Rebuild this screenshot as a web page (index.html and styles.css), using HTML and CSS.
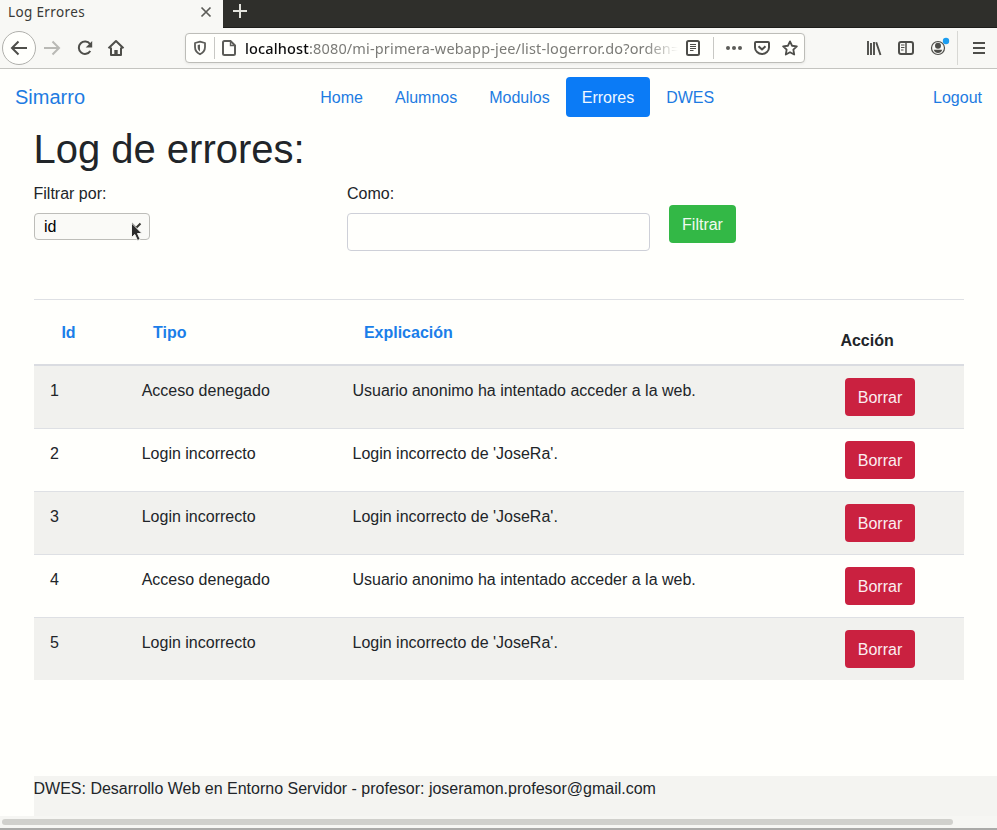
FILE: index.html
```html
<!DOCTYPE html>
<html lang="es">
<head>
<meta charset="utf-8">
<title>Log Errores</title>
<link rel="stylesheet" href="styles.css">
</head>
<body>
<div class="tabs">
  <div class="tab"><span class="tab-title">Log Errores</span>
    <svg width="12" height="12" viewBox="0 0 12 12"><path d="M1.500 1.500l9 9M10.500 1.500l-9 9" stroke="#5c5c58" stroke-width="1.700" fill="none"/></svg>
  </div>
  <svg class="plus" width="16" height="16" viewBox="0 0 16 16"><path d="M8 1v14M1 8h14" stroke="#e2e2dc" stroke-width="2"/></svg>
</div>
<div class="toolbar">
  <div class="back"><svg width="18" height="18" viewBox="0 0 18 18" class="ico"><path d="M17 9H2M8.500 2.500L2 9l6.500 6.500"/></svg></div>
  <svg width="18" height="18" viewBox="0 0 18 18" class="ico forward"><path d="M1 9h15M9.500 2.500L16 9l-6.500 6.500"/></svg>
  <svg width="18" height="18" viewBox="0 0 18 18" class="ico reload"><path d="M14 5A6.200 6.200 0 1 0 14.300 12"/><path d="M16.200 2v6.500H9.700z" fill="#4e4e4a" stroke="none"/></svg>
  <svg width="18" height="18" viewBox="0 0 18 18" class="ico home"><path d="M1.500 9.300L9 2l7.500 7.300M4 8.500V16h10V8.500" stroke-linejoin="round"/><path d="M7.300 16v-5h3.400v5z" fill="#4e4e4a" stroke="none"/></svg>
  <div class="urlbar">
    <svg width="14" height="16" viewBox="0 0 14 16" class="ico shield"><path d="M7 1.700L12 3v4c0 3.500-2 5.800-5 7.300C4 12.800 2 10.500 2 7V3z" stroke-linejoin="round"/><path d="M7 4.500v7C5.300 10.300 4.700 9 4.700 7V5z" fill="#5c5c58" stroke="none"/></svg>
    <span class="sep"></span>
    <svg width="14" height="16" viewBox="0 0 14 16" class="ico page"><path d="M2.500 1H8.500L13 5.500V13.500a1.500 1.500 0 0 1-1.500 1.500H2.500A1.500 1.500 0 0 1 1 13.500V2.500A1.500 1.500 0 0 1 2.500 1z"/><path d="M8.500 1v4.500H13" stroke-width="1.400"/></svg>
    <div class="url"><b>localhost</b>:8080/mi-primera-webapp-jee/list-logerror.do?orden=</div>
    <svg width="14" height="16" viewBox="0 0 14 16" class="ico reader"><rect x="1" y="1" width="12" height="14" rx="1.500"/><path d="M4 4.500h6M4 6.500h6M4 8.500h6M4 10.500h3.500" stroke-width="1"/></svg>
    <span class="sep sep2"></span>
    <svg width="16" height="6" viewBox="0 0 16 6" class="dots"><circle cx="2" cy="3" r="2"/><circle cx="8" cy="3" r="2"/><circle cx="14" cy="3" r="2"/></svg>
    <svg width="16" height="16" viewBox="0 0 16 16" class="ico pocket"><path d="M2 2h12a1 1 0 0 1 1 1v4.500a7 6.500 0 0 1-14 0V3a1 1 0 0 1 1-1zM4.500 6.200L8 9.500l3.500-3.300" stroke-linejoin="round"/></svg>
    <svg width="16" height="16" viewBox="0 0 16 16" class="ico star"><path d="M8 1.400l2.050 4.350 4.800.65-3.500 3.300.85 4.800L8 12.200l-4.200 2.300.85-4.800-3.500-3.300 4.800-.65z" stroke-linejoin="round" stroke-width="1.800"/></svg>
  </div>
  <svg width="16" height="16" viewBox="0 0 16 16" class="ico library"><path d="M2 1v14M5 3v12M8 2v13M10.200 2.300L14.500 15" stroke-width="1.900"/></svg>
  <svg width="16" height="16" viewBox="0 0 16 16" class="ico sidebar"><rect x="1" y="2" width="14" height="12" rx="2"/><path d="M8 2v12" stroke-width="1.500"/><path d="M3 5h3.500M3 7.500h3.500M3 10h2.500" stroke-width="1"/></svg>
  <svg width="20" height="20" viewBox="0 0 20 20" class="ico account"><circle cx="8" cy="11" r="6.500" stroke-width="1.200"/><g fill="#4e4e4a" stroke="none"><circle cx="8" cy="8.700" r="3"/><path d="M3.700 12.700h8.600c-.8 2.100-2.200 3.300-4.300 3.300s-3.500-1.200-4.300-3.300z"/></g><circle cx="16" cy="4" r="3.200" fill="#1b9df0" stroke="none"/></svg>
  <span class="tool-sep"></span>
  <svg width="12" height="12" viewBox="0 0 12 12" class="ico menu"><path d="M0 1h12M0 6h12M0 11h12"/></svg>
</div>

<nav class="navbar">
  <a class="brand">Simarro</a>
  <div class="pills"><a>Home</a><a>Alumnos</a><a>Modulos</a><a class="active">Errores</a><a>DWES</a></div>
  <a class="logout">Logout</a>
</nav>

<main>
  <h1>Log de errores:</h1>
  <form class="filter">
    <div class="by"><label>Filtrar por:</label>
      <div class="select"><span>id</span>
        <svg class="chevron" width="12" height="8" viewBox="0 0 12 8"><path d="M1.500 1.500L6 6l4.500-4.500" fill="none" stroke="#383834" stroke-width="2"/></svg>
        <svg class="pointer" width="13" height="20" viewBox="0 0 13 20"><path d="M1.500 1v14.500l3.300-3 2.700 6 2.700-1.200-2.700-5.800h4.500z" fill="#2b2b2b" stroke="#f3f3f0"/></svg>
      </div>
    </div>
    <div class="like"><label>Como:</label><input type="text" aria-label="Como"></div>
    <button type="button" class="btn green">Filtrar</button>
  </form>

  <div class="table">
    <div class="row head"><a>Id</a><a>Tipo</a><a>Explicación</a><strong>Acción</strong></div>
    <div class="row"><span>1</span><span>Acceso denegado</span><span>Usuario anonimo ha intentado acceder a la web.</span><button class="btn red">Borrar</button></div>
    <div class="row"><span>2</span><span>Login incorrecto</span><span>Login incorrecto de 'JoseRa'.</span><button class="btn red">Borrar</button></div>
    <div class="row"><span>3</span><span>Login incorrecto</span><span>Login incorrecto de 'JoseRa'.</span><button class="btn red">Borrar</button></div>
    <div class="row"><span>4</span><span>Acceso denegado</span><span>Usuario anonimo ha intentado acceder a la web.</span><button class="btn red">Borrar</button></div>
    <div class="row"><span>5</span><span>Login incorrecto</span><span>Login incorrecto de 'JoseRa'.</span><button class="btn red">Borrar</button></div>
  </div>
</main>
<footer>DWES: Desarrollo Web en Entorno Servidor - profesor: joseramon.profesor@gmail.com</footer>
<div class="scroll"><div class="thumb"></div></div>
</body>
</html>
```
FILE: styles.css
```css
* { box-sizing: border-box; }
body {
  margin: 0; height: 830px; overflow: hidden; display: flex; flex-direction: column;
  background: #fffffc; color: #212529; font: 16px/26px "Liberation Sans", Arial, sans-serif;
}
svg { display: block; flex: none; }
.ico { fill: none; stroke: #4e4e4a; stroke-width: 2; }

/* Browser chrome */
.tabs { height: 28px; flex: none; display: flex; background: #2f2f2b; border-bottom: 1px solid #1e1e1b; }
.tab {
  width: 223px; height: 28px; background: #f8f8f5; display: flex; align-items: center;
  justify-content: space-between; padding: 0 11px 4px 8px;
}
.tab-title { font: 13.5px/20px "Noto Sans", sans-serif; letter-spacing: 0.36px; color: #3a3a37; white-space: nowrap; }
.plus { margin: 3px 0 0 9px; }
.toolbar {
  height: 41px; flex: none; display: flex; align-items: center; background: #f8f8f5;
  border-bottom: 1px solid #c4c4c0; padding-left: 2px;
}
.back {
  width: 34px; height: 34px; border: 1px solid #b0b0ac; border-radius: 50%; background: #fffffc;
  display: flex; align-items: center; justify-content: center; flex: none;
}
.forward { margin-left: 7px; stroke: #b9b9b5; }
.reload { margin-left: 15px; }
.home { margin-left: 13px; }
.urlbar {
  width: 620px; height: 30px; margin-left: 60px; flex: none; display: flex; align-items: center;
  border: 1px solid #bdbdb8; border-radius: 4px; background: #fffffc; box-shadow: 0 1px 3px #0001;
}
.shield { margin-left: 7px; stroke: #5c5c58; stroke-width: 1.8; }
.sep { width: 1px; height: 22px; background: #c8c8c4; margin-left: 7px; flex: none; }
.page { margin-left: 7px; stroke: #5c5c58; }
.url {
  width: 433px; margin-left: 9px; font: 14.5px/22px "Noto Sans", sans-serif; color: #7b7b77;
  white-space: nowrap; overflow: hidden; letter-spacing: 0.15px;
  mask-image: linear-gradient(to right, #000 400px, transparent 433px);
}
.url b { font-weight: 500; color: #0c0c0d; }
.reader { margin-left: 8px; }
.sep2 { margin-left: 13px; }
.dots { margin-left: 12px; fill: #5c5c58; }
.pocket { margin-left: 12px; }
.star { margin-left: 12px; }
.library { margin-left: 61px; }
.sidebar { margin-left: 16px; }
.account { margin: -2px 0 0 16px; }
.tool-sep { width: 1px; height: 34px; background: #d8d8d4; margin-left: 7px; }
.menu { margin-left: 15px; }

/* Site navigation */
.navbar { height: 56px; flex: none; display: flex; align-items: center; justify-content: space-between; padding: 0 15px; color: #1d7be2; }
.brand { font-size: 20px; width: 289.3px; }
.pills { display: flex; flex: 1; }
.pills a { padding: 8px 16px 6px; border-radius: 4px; }
.pills .active { background: #0b7bf6; color: #f0f8ff; }
.logout { padding-top: 2px; }

main { padding: 0 33px 0 34px; height: 651px; flex: none; }
h1 { margin: 0 0 0 -0.6px; font-size: 40px; line-height: 48px; font-weight: 400; }
.filter { display: flex; margin-top: 8px; height: 118px; }
label { display: block; margin-bottom: 6px; }
.by { width: 313px; }
.by label { margin-left: -0.5px; }
.select {
  position: relative; width: 116px; height: 27px; border: 1px solid #bdbdb9; border-radius: 4px;
  background: #fafaf7; color: #000; padding-left: 9px; line-height: 26px;
}
.chevron { position: absolute; right: 7px; top: 8px; }
.pointer { position: absolute; left: 95px; top: 8px; }
.like { width: 303px; }
.like input { display: block; width: 303px; height: 38px; border: 1px solid #ced0d8; border-radius: 4px; background: #fffffc; padding: 6px 12px; }
.btn { height: 38px; border: 0; border-radius: 4px; padding: 2px 0 0; font: inherit; color: #fbeef0; }
.green { width: 67px; margin: 24px 0 0 19px; background: #33b846; color: #effaf0; }
.red { width: 70px; margin-left: 4px; background: #ca2140; }

.table { border-top: 1px solid #dee0e4; }
.row {
  display: grid; grid-template-columns: 91.7px 210.8px 488.500px 1fr; align-items: start;
  height: 63px; padding: 12px 0 0 16px; border-top: 1px solid #dee0e4;
}
.row:nth-child(even) { background: #f1f1ee; }
.head { height: 66px; padding-top: 20px; border-top: 0; border-bottom: 2px solid #dadce1; font-weight: 700; }
.head + .row { height: 62px; border-top: 0; }
.head a { padding-left: 11.4px; color: #1b7ee9; }
.head strong { margin: 8px 0 0 -0.6px; }

footer { height: 40px; flex: none; margin-left: 34px; background: #f4f4f1; white-space: nowrap; text-indent: -0.5px; }
.scroll { height: 14px; flex: none; background: #f6f6f3; border-bottom: 2px solid #aaaaa8; padding: 3px 0 0 2px; }
.thumb { width: 951px; height: 6px; border-radius: 3px; background: #d0d0cc; }
```
